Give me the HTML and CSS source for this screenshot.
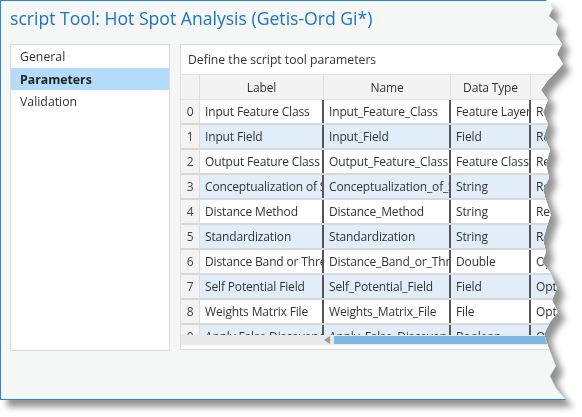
FILE: index.html
```html
<!DOCTYPE html>
<html>
<head>
<meta charset="utf-8">
<link rel="stylesheet" href="styles.css">
</head>
<body>
<div class="frame">
  <div class="window">
    <h1 class="title">script Tool: Hot Spot Analysis (Getis-Ord Gi*)</h1>
    <div class="content">
      <nav class="side">
        <div class="item">General</div>
        <div class="item selected">Parameters</div>
        <div class="item">Validation</div>
      </nav>
      <section class="main">
        <div class="main-head">Define the script tool parameters</div>
        <div class="grid">
          <div class="row head">
            <div class="c num"></div>
            <div class="c label">Label</div>
            <div class="c name">Name</div>
            <div class="c type">Data Type</div>
            <div class="c extra"></div>
          </div>
          <div class="row"><div class="c num">0</div><div class="c label">Input Feature Class</div><div class="c name">Input_Feature_Class</div><div class="c type">Feature Layer</div><div class="c extra">Required</div></div>
          <div class="row alt"><div class="c num">1</div><div class="c label">Input Field</div><div class="c name">Input_Field</div><div class="c type">Field</div><div class="c extra">Required</div></div>
          <div class="row"><div class="c num">2</div><div class="c label">Output Feature Class</div><div class="c name">Output_Feature_Class</div><div class="c type">Feature Class</div><div class="c extra">Required</div></div>
          <div class="row alt"><div class="c num">3</div><div class="c label">Conceptualization of Spatial Relationships</div><div class="c name">Conceptualization_of_Spatial</div><div class="c type">String</div><div class="c extra">Required</div></div>
          <div class="row"><div class="c num">4</div><div class="c label">Distance Method</div><div class="c name">Distance_Method</div><div class="c type">String</div><div class="c extra">Required</div></div>
          <div class="row alt"><div class="c num">5</div><div class="c label">Standardization</div><div class="c name">Standardization</div><div class="c type">String</div><div class="c extra">Required</div></div>
          <div class="row"><div class="c num">6</div><div class="c label">Distance Band or Threshold Distance</div><div class="c name">Distance_Band_or_Threshold</div><div class="c type">Double</div><div class="c extra">Optional</div></div>
          <div class="row alt"><div class="c num">7</div><div class="c label">Self Potential Field</div><div class="c name">Self_Potential_Field</div><div class="c type">Field</div><div class="c extra">Optional</div></div>
          <div class="row"><div class="c num">8</div><div class="c label">Weights Matrix File</div><div class="c name">Weights_Matrix_File</div><div class="c type">File</div><div class="c extra">Optional</div></div>
          <div class="row alt"><div class="c num">9</div><div class="c label">Apply False Discovery Rate</div><div class="c name">Apply_False_Discovery_Rate</div><div class="c type">Boolean</div><div class="c extra">Optional</div></div>
        </div>
        <div class="hscroll">
          <span class="arrow"></span>
          <span class="thumb"></span>
        </div>
      </section>
    </div>
  </div>
</div>
</body>
</html>
```

FILE: styles.css
```css
html, body {
  margin: 0;
  padding: 0;
  background: #ffffff;
}
body {
  width: 582px;
  height: 417px;
  overflow: hidden;
  font-family: "Open Sans", "Noto Sans", sans-serif;
}
.frame {
  width: 575px;
  height: 400px;
  filter: drop-shadow(7px 7px 3px rgba(0, 0, 0, 0.42));
}
.window {
  box-sizing: border-box;
  width: 575px;
  height: 400px;
  overflow: hidden;
  background: #f5f6f6;
  border: 1px solid #2b84d4;
  border-right: none;
  clip-path: polygon(0 0, 546px 0, 553px 8px, 549px 16px, 558px 24px, 556px 34px, 562px 44px, 557px 54px, 563px 64px, 556px 72px, 548px 80px, 541px 90px, 548px 100px, 543px 112px, 548px 124px, 544px 136px, 550px 150px, 546px 164px, 549px 178px, 543px 190px, 546px 200px, 551px 214px, 547px 226px, 543px 240px, 546px 252px, 542px 262px, 550px 272px, 557px 288px, 552px 300px, 558px 312px, 550px 322px, 544px 334px, 548px 346px, 552px 356px, 556px 366px, 550px 376px, 556px 388px, 566px 400px, 0 400px);
  display: flex;
  flex-direction: column;
}
.title {
  margin: 0;
  padding: 3px 0 0 9px;
  height: 43px;
  box-sizing: border-box;
  font-family: "Open Sans", sans-serif;
  font-weight: 400;
  font-size: 17.6px;
  line-height: 28px;
  color: #1a74c4;
  white-space: nowrap;
}
.content {
  display: flex;
  gap: 10px;
  padding-left: 9px;
  align-items: flex-start;
}
.side {
  flex: none;
  box-sizing: border-box;
  width: 160px;
  height: 307px;
  background: #fff;
  border: 1px solid #dcdcdc;
  font-size: 12.3px;
  color: #333;
}
.item {
  height: 22.5px;
  line-height: 23px;
  padding-left: 9px;
}
.item.selected {
  background: #b2dcf9;
  font-weight: 700;
  color: #222;
}
.main {
  flex: none;
  box-sizing: border-box;
  width: 420px;
  height: 306px;
  background: #fff;
  border: 1px solid #dcdcdc;
  border-right: none;
  display: flex;
  flex-direction: column;
}
.main-head {
  flex: none;
  height: 29px;
  line-height: 29px;
  padding-left: 7px;
  font-size: 12.2px;
  color: #333;
  border-bottom: 1px solid #e2e2e2;
  white-space: nowrap;
}
.grid {
  flex: none;
  height: 260px;
  overflow: hidden;
}
.row {
  display: flex;
  height: 25px;
  box-sizing: border-box;
  border-bottom: 2px solid #d8d8d8;
  background: #fff;
}
.row.alt {
  background: #e1eefa;
}
.row.head {
  border-bottom: 1px solid #e4e4e4;
  background: #f3f3f3;
}
.c {
  flex: none;
  box-sizing: border-box;
  overflow: hidden;
  white-space: nowrap;
  font-size: 12px;
  letter-spacing: -0.15px;
  line-height: 24px;
  color: #333;
  padding-left: 5px;
  border-right: 2px solid #555;
}
.head .c {
  text-align: center;
  padding-left: 0;
  line-height: 26px;
  border-right: 1px solid #e0e0e0;
  color: #333;
}
.num {
  width: 19px;
  padding-left: 0;
  text-align: center;
  background: #f3f3f3;
  color: #444;
}
.row .num {
  padding-left: 0;
  border-right: 1px solid #dcdcdc;
}
.label { width: 124px; }
.name { width: 127px; }
.type { width: 80px; }
.extra { width: 120px; }
.row .extra { border-right: none; }
.hscroll {
  flex: none;
  display: flex;
  align-items: center;
  height: 10px;
  background: #e9e9e9;
  padding-left: 143px;
}
.arrow {
  width: 0;
  height: 0;
  border-top: 4px solid transparent;
  border-bottom: 4px solid transparent;
  border-right: 6px solid #9a9a9a;
  margin-right: 4px;
}
.thumb {
  flex: 1;
  height: 8px;
  background: #7fb8e2;
}
```
